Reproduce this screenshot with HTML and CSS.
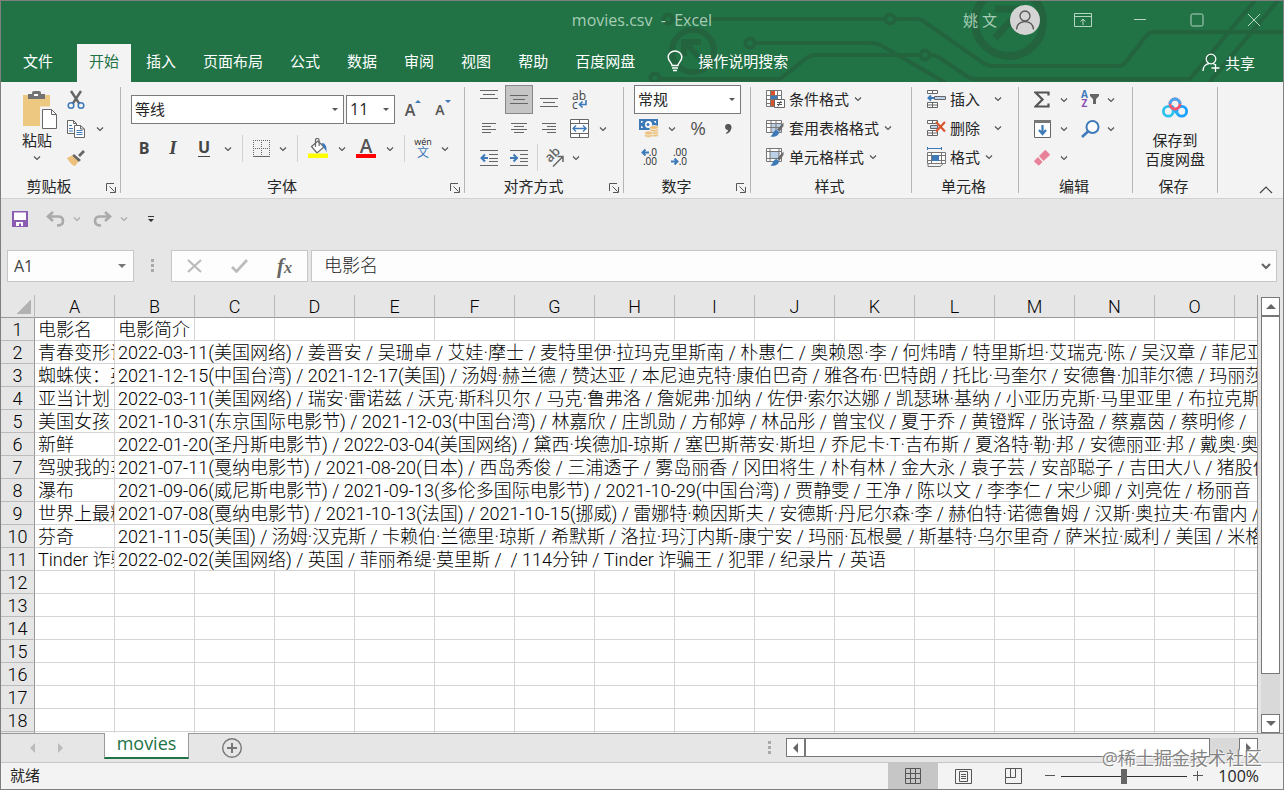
FILE: index.html
```html
<!DOCTYPE html>
<html lang="zh-CN">
<head>
    <meta charset="UTF-8">
    <meta name="viewport" content="width=device-width, initial-scale=1.0">
    <title>movies.csv - Excel</title>
    <link rel="stylesheet" href="styles.css">
</head>
<body>
    <!-- shared glyphs -->
    <svg class="defs" aria-hidden="true">
        <symbol id="chev" viewBox="0 0 8 8"><path d="M1 2.5l3 3 3-3" fill="none" stroke="currentColor" stroke-width="1.2"/></symbol>
        <symbol id="launch" viewBox="0 0 10 10"><path d="M.5 8V.5H8M3.5 3.5l5 5M9.5 4v5.500H4" fill="none" stroke="#555"/></symbol>
        <symbol id="brush" viewBox="0 0 20 20">
            <path d="M18.500 4.500L12 11.500l2.500 2L18.500 8z" fill="#6a6a6a"/>
            <path d="M11.500 12c-3 0-3 4-6 6.500 4 .8 8.500-.5 8.500-4.500z" fill="#3f7ab8"/>
        </symbol>
    </svg>

    <div class="window">
        <header class="top">
            <svg class="circuit" width="640" height="81" viewBox="644 1 640 81" fill="none" stroke="#23643f" stroke-width="4" aria-hidden="true">
                <circle cx="669" cy="19" r="4.500"/><circle cx="891" cy="19" r="4.500"/>
                <path d="M674 19h212M896 19h22q5 0 9 4l56 39q5 4 10 4h126q5 0 8-4l20-26q3-4 8-4h140"/>
                <circle cx="751" cy="43" r="4.500"/>
                <path d="M756 43h115q8 0 14 4l62 36"/>
                <circle cx="926" cy="55" r="4.500"/><circle cx="656" cy="78" r="4.500"/>
                <path d="M661 79h120l28-22q3-2 8-2h104M931 55q6 0 10 3l28 19q3 2 8 2h214l66-80M1209 84l72-86"/>
                <circle cx="694" cy="51" r="21" stroke-width="6"/>
                <path d="M705 62l-20-20M685 56V42h17" stroke-width="6"/>
                <circle cx="1010" cy="22" r="34" stroke-width="8"/>
                <path d="M996 38l24-26M996 9h24v25" stroke-width="7"/>
            </svg>

            <div class="titlebar">
                <h1 class="doc-title">movies.csv&nbsp; -&nbsp; Excel</h1>
                <div class="account">
                    <span class="user">姚 文</span>
                    <svg class="avatar" width="30" height="30" viewBox="0 0 30 30"><circle cx="15" cy="15" r="15" fill="#d4d4d4"/><g fill="none" stroke="#555" stroke-width="1.3"><circle cx="15" cy="11" r="5"/><path d="M6.500 24.500c0-10.500 17-10.500 17 0"/></g></svg>
                    <button class="win-btn" aria-label="功能区显示选项"><svg width="18" height="14" viewBox="0 0 18 14"><path d="M.5.5h17v13H.5zM.5 3.500h17M9 12V6M6.500 8.500L9 6l2.500 2.500"/></svg></button>
                    <button class="win-btn" aria-label="最小化"><svg width="14" height="14" viewBox="0 0 14 14"><path d="M1 6.500h12"/></svg></button>
                    <button class="win-btn" aria-label="最大化"><svg width="14" height="14" viewBox="0 0 14 14"><rect x="1" y="1" width="12" height="12" rx="1.500"/></svg></button>
                    <button class="win-btn" aria-label="关闭"><svg width="14" height="14" viewBox="0 0 14 14"><path d="M1 1l12 12M13 1L1 13"/></svg></button>
                </div>
            </div>

            <nav class="tabs">
                <button class="tab file">文件</button>
                <button class="tab active">开始</button>
                <button class="tab">插入</button>
                <button class="tab">页面布局</button>
                <button class="tab">公式</button>
                <button class="tab">数据</button>
                <button class="tab">审阅</button>
                <button class="tab">视图</button>
                <button class="tab">帮助</button>
                <button class="tab">百度网盘</button>
                <button class="tab tell-me">
                    <svg width="16" height="22" viewBox="0 0 16 22" fill="none" stroke="#fff" stroke-width="1.4"><path d="M5 15.500c0-3-3.800-4-3.800-8.200a6.800 6.300 0 0 1 13.600 0c0 4.200-3.800 5.200-3.800 8.200zM5 18h6M6 20.500h4"/></svg>
                    操作说明搜索
                </button>
                <button class="tab share">
                    <svg width="19" height="19" viewBox="0 0 19 19" fill="none" stroke="#fff" stroke-width="1.300"><circle cx="9" cy="6" r="4.800"/><path d="M1 18c0-4 2.500-7 6-7.500M11 10.500l2 1M13.500 11v8M9.500 15h8"/></svg>
                    共享
                </button>
            </nav>
        </header>

        <section class="ribbon">
            <div class="group clipboard">
                <div class="body">
                    <button class="big paste">
                        <svg width="34" height="38" viewBox="0 0 34 38"><path d="M0 4h27v31H0z" fill="#ecc880"/><path d="M5 3h4V2q0-2 2-2h5q2 0 2 2v1h4v5H5z" fill="#737373"/><path d="M11 3h4v2h-4z" fill="#fff"/><path d="M18.500 17h11v0l4.500 5v15.500H18.500z" fill="#fff" stroke="#f3f3f3" stroke-width="3"/><path d="M19.500 18.500h9l5 5v14h-14zM28.500 18.500v5h5" fill="#fff" stroke="#666"/></svg>
                        <span>粘贴</span>
                        <svg class="chev"><use href="#chev"/></svg>
                    </button>
                    <div class="stack">
                        <div class="row"><button class="ib" aria-label="剪切"><svg width="18" height="20" viewBox="0 0 18 20"><path d="M4 1l8.500 13M14 1L5.500 14" stroke="#666" stroke-width="2.400" fill="none"/><g fill="none" stroke="#3f7ab8" stroke-width="1.500"><circle cx="4" cy="15.500" r="2.800"/><circle cx="14" cy="15.500" r="2.800"/></g></svg></button></div>
                        <div class="row"><button class="ib" aria-label="复制"><svg width="18" height="18" viewBox="0 0 18 18"><g fill="#fff" stroke="#666"><path d="M.5.500h6l3 3v10h-9zM6.500.500v3h3"/><path d="M7.500 5.500h6l4 3.500v8.500h-10zM13.500 5.500V9h4"/></g><path d="M2 5.500h3M2 8.500h4M2 11h4M9.500 10.500h6M9.500 12.500h6M9.500 14.500h6" stroke="#3f7ab8"/></svg></button><button class="drop" aria-label="复制选项"><svg class="chev"><use href="#chev"/></svg></button></div>
                        <div class="row"><button class="ib" aria-label="格式刷"><svg width="18" height="16" viewBox="0 0 18 16"><path d="M7 4l7 6-2.500 2L5 6zM11 5l5-5 2 2-5 5z" fill="#666"/><path d="M0 8l5-2.500 6.500 6L8 16q-4-1-8-8z" fill="#ecc07a"/></svg></button></div>
                    </div>
                </div>
                <div class="caption">剪贴板<button class="launcher" aria-label="剪贴板设置"><svg width="10" height="10"><use href="#launch"/></svg></button></div>
            </div>

            <div class="group font">
                <div class="body lower">
                    <div class="row">
                        <span class="combo name"><select aria-label="字体"><option>等线</option></select></span>
                        <span class="combo size"><select aria-label="字号"><option>11</option></select></span>
                        <button class="ib grow" aria-label="增大字号">A<i class="tri up"></i></button>
                        <button class="ib shrink" aria-label="减小字号">A<i class="tri down"></i></button>
                    </div>
                    <div class="row formats">
                        <button class="ib bold" aria-label="加粗">B</button>
                        <button class="ib italic" aria-label="倾斜">I</button>
                        <button class="ib under" aria-label="下划线"><span>U</span></button>
                        <button class="drop" aria-label="下划线选项"><svg class="chev"><use href="#chev"/></svg></button>
                        <span class="vline"></span>
                        <button class="ib narrow" aria-label="边框"><svg width="17" height="17" viewBox="0 0 17 17" fill="none" stroke="#666"><path d="M0 .5h17M0 8.500h17M.5 0v16M8.500 0v16M16.500 0v16" stroke-dasharray="1 1"/><path d="M0 16.500h17"/></svg></button>
                        <button class="drop" aria-label="边框选项"><svg class="chev"><use href="#chev"/></svg></button>
                        <span class="vline"></span>
                        <button class="ib" aria-label="填充颜色"><svg width="20" height="20" viewBox="0 0 20 20"><path d="M3.500 8.500L10 3l6 6-7 6z" fill="#fff" stroke="#666" stroke-width="1.200"/><path d="M7.500 9V2.500q0-2 1.800-2t1.800 2V8" fill="none" stroke="#666" stroke-width="1.200"/><path d="M13.500 5q6 0 5 9.500-1-3-3-5z" fill="#3f7ab8"/><path d="M0 15.500h20V20H0z" fill="#ff0"/></svg></button>
                        <button class="drop" aria-label="填充颜色选项"><svg class="chev"><use href="#chev"/></svg></button>
                        <button class="ib color" aria-label="字体颜色"><span>A</span></button>
                        <button class="drop" aria-label="字体颜色选项"><svg class="chev"><use href="#chev"/></svg></button>
                        <span class="vline"></span>
                        <button class="ib narrow pinyin" aria-label="拼音"><span>wén</span><span>文</span></button>
                        <button class="drop" aria-label="拼音选项"><svg class="chev"><use href="#chev"/></svg></button>
                    </div>
                </div>
                <div class="caption">字体<button class="launcher" aria-label="字体设置"><svg width="10" height="10"><use href="#launch"/></svg></button></div>
            </div>

            <div class="group align">
                <div class="body">
                    <div class="row">
                        <button class="ib" aria-label="顶端对齐"><svg class="lines" width="18" height="20"><path d="M0 .5h18M3 4.500h12M0 8.500h18"/></svg></button>
                        <button class="ib on" aria-label="垂直居中"><svg class="lines" width="18" height="20"><path d="M0 5.500h18M3 9.500h12M0 13.500h18"/></svg></button>
                        <button class="ib" aria-label="底端对齐"><svg class="lines" width="18" height="20"><path d="M0 8.500h18M3 12.500h12M0 16.500h18"/></svg></button>
                        <button class="ib wrap" aria-label="自动换行"><span>ab</span><span>c<svg width="9" height="8" viewBox="0 0 9 8"><path d="M8 0v4.500H2M4.500 1.500l-3 3 3 3" fill="none" stroke="#3f7ab8" stroke-width="1.600"/></svg></span></button>
                    </div>
                    <div class="row">
                        <button class="ib" aria-label="左对齐"><svg class="lines" width="14" height="11"><path d="M0 .5h14M0 3.500h9M0 6.500h14M0 9.500h9"/></svg></button>
                        <button class="ib" aria-label="居中"><svg class="lines" width="16" height="11"><path d="M0 .5h16M3 3.500h10M0 6.500h16M3 9.500h10"/></svg></button>
                        <button class="ib" aria-label="右对齐"><svg class="lines" width="14" height="11"><path d="M0 .5h14M5 3.500h9M0 6.500h14M5 9.500h9"/></svg></button>
                        <button class="ib" aria-label="合并后居中"><svg width="19" height="19" viewBox="0 0 19 19"><path d="M.5.500h18v18H.5zM.5 4.500h18M.5 14.500h18M9.500.500v4M9.500 14.500v4" fill="#fff" stroke="#666"/><path d="M3 9.500h13M6 6.500l-3 3 3 3M13 6.500l3 3-3 3" fill="none" stroke="#3f7ab8" stroke-width="1.400"/></svg></button>
                        <button class="drop" aria-label="合并选项"><svg class="chev"><use href="#chev"/></svg></button>
                    </div>
                    <div class="row">
                        <button class="ib" aria-label="减少缩进"><svg class="lines" width="18" height="16"><path d="M0 .5h18M9 4.500h9M9 8.500h9M9 11.500h9M0 15.500h18"/><path d="M8 8H1.500M5 4.500L1.500 8 5 11.500" class="blue"/></svg></button>
                        <button class="ib" aria-label="增加缩进"><svg class="lines" width="18" height="16"><path d="M0 .5h18M10 4.500h8M10 8.500h8M10 11.500h8M0 15.500h18"/><path d="M0 8h6.500M3.500 4.500L7 8l-3.500 3.500" class="blue"/></svg></button>
                        <span class="vline tight"></span>
                        <button class="ib narrow" aria-label="方向"><svg class="orient" width="20" height="20" viewBox="0 0 20 20"><text x="6" y="15" transform="rotate(-45 6 15)">ab</text><path d="M9 18.500L18.500 9M13.500 8.500h5.500V14" fill="none" stroke="#666" stroke-width="1.500"/></svg></button>
                        <button class="drop" aria-label="方向选项"><svg class="chev"><use href="#chev"/></svg></button>
                    </div>
                </div>
                <div class="caption">对齐方式<button class="launcher" aria-label="对齐设置"><svg width="10" height="10"><use href="#launch"/></svg></button></div>
            </div>

            <div class="group number">
                <div class="body">
                    <div class="row">
                        <span class="combo format"><select aria-label="数字格式"><option>常规</option></select></span>
                    </div>
                    <div class="row">
                        <button class="ib" aria-label="会计数字格式"><svg width="20" height="19" viewBox="0 0 20 19"><path d="M0 0h19v11H0z" fill="#3f7ab8"/><path d="M2 2h2q-.5 2-2 2zM17 2h-2q.5 2 2 2zM2 9h2q-.5-2-2-2z" fill="#fff"/><circle cx="9.500" cy="5.500" r="3.500" fill="#fff"/><circle cx="9" cy="5.500" r="1.500" fill="#3f7ab8"/><g fill="#ecc07a" stroke="#f3f3f3" stroke-width=".8"><ellipse cx="15" cy="16" rx="4.500" ry="2"/><ellipse cx="15" cy="13.500" rx="4.500" ry="2"/><ellipse cx="15" cy="11" rx="4.500" ry="2"/><ellipse cx="15" cy="8.500" rx="4.500" ry="2"/><ellipse cx="9.500" cy="16.500" rx="4" ry="2"/><ellipse cx="9.500" cy="14" rx="4" ry="2"/></g></svg></button>
                        <button class="drop" aria-label="货币选项"><svg class="chev"><use href="#chev"/></svg></button>
                        <button class="ib percent" aria-label="百分比样式">%</button>
                        <button class="ib comma" aria-label="千位分隔样式"><svg width="7" height="10" viewBox="0 0 7 10"><path d="M3 0a3 3 0 0 1 3.500 3Q6.500 8 1.500 10l-.5-1q2-1.500 2.200-3A3 3 0 0 1 3 0z" fill="#555"/></svg></button>
                    </div>
                    <div class="row">
                        <button class="ib decimals" aria-label="增加小数位数"><span><svg width="8" height="7"><path d="M8 3.500H1.500M4.500.5l-3 3 3 3" class="blue"/></svg>.0</span><span>.00</span></button>
                        <button class="ib decimals" aria-label="减少小数位数"><span>.00</span><span><svg width="8" height="7"><path d="M0 3.500h6.500M3.500.5l3 3-3 3" class="blue"/></svg>.0</span></button>
                    </div>
                </div>
                <div class="caption">数字<button class="launcher" aria-label="数字设置"><svg width="10" height="10"><use href="#launch"/></svg></button></div>
            </div>

            <div class="group styles">
                <div class="body">
                    <button class="row cmd"><svg width="20" height="20" viewBox="0 0 20 20"><path d="M1.500 1.500h15v16h-15zM1.500 6.500h15M1.500 10.500h15M1.500 14.500h15M5.500 1.500v16M12.500 1.500v16" fill="#fff" stroke="#777"/><path d="M6 2h4v4H6zM6 11h3v6H6z" fill="#d9532c"/><path d="M6 7h6v3H6z" fill="#3f7ab8"/><path d="M9.500 10.500h10v8h-10z" fill="#fff" stroke="#666"/><path d="M12 13.500h5M12 15.500h5M16 12l-3 5.500" stroke="#555"/></svg>条件格式<svg class="chev"><use href="#chev"/></svg></button>
                    <button class="row cmd"><svg width="20" height="20" viewBox="0 0 20 20"><path d="M1.500 2.500h15v12h-15z" fill="#fff" stroke="#777"/><path d="M6 6h10v8H6z" fill="#bcd0e8"/><path d="M1.500 5.500h15M1.500 9.500h15M6 2.500v12M11 2.500v12" stroke="#777"/><use href="#brush"/></svg>套用表格格式<svg class="chev"><use href="#chev"/></svg></button>
                    <button class="row cmd"><svg width="20" height="20" viewBox="0 0 20 20"><path d="M1.500 1.500h15v13h-15z" fill="#fff" stroke="#777"/><path d="M5 5h9v7H5z" fill="#bcd0e8"/><path d="M1.500 4.500h15M1.500 11.500h15M5 1.500v13M14 1.500v13" stroke="#777"/><use href="#brush"/></svg>单元格样式<svg class="chev"><use href="#chev"/></svg></button>
                </div>
                <div class="caption">样式</div>
            </div>

            <div class="group cells">
                <div class="body">
                    <button class="row cmd wide"><svg width="19" height="20" viewBox="0 0 19 20"><path d="M.5 1.500h10v3H.5zM5.500 1.500v3M.5 13.500h10v5H.5zM.5 16h10M5.500 13.500v5M7.500 7.500h11v3h-11z" fill="#fff" stroke="#666"/><path d="M8 8h10v2H8z" fill="#bcd0e8"/><path d="M7 9H1.500M4 6.500L1.500 9 4 11.500" class="blue"/></svg>插入<svg class="chev"><use href="#chev"/></svg></button>
                    <button class="row cmd wide"><svg width="19" height="20" viewBox="0 0 19 20"><path d="M.5 2.500h10v3H.5zM5.500 2.500v3M.5 12.500h10v5H.5zM.5 15h10M5.500 12.500v5" fill="#fff" stroke="#666"/><path d="M3.500 7.500h7v3h-7z" fill="#bcd0e8" stroke="#666"/><path d="M9 4l9 9.500M18 4L9 13.500" stroke="#d9532c" stroke-width="2.200"/></svg>删除<svg class="chev"><use href="#chev"/></svg></button>
                    <button class="row cmd"><svg width="19" height="20" viewBox="0 0 19 20"><path d="M.5 0v3M14.500 0v3M1 1.500h13" stroke="#3f7ab8"/><path d="M.5 5.500h18v11H.5zM.5 8.500h18M.5 13.500h18M4.500 5.500v11M14.500 5.500v11" fill="#fff" stroke="#777"/><path d="M5 8h7v6H5z" fill="#3f7ab8"/><path d="M1 19.500h12q2-1 3-3M1 16.500v3" fill="none" stroke="#777"/></svg>格式<svg class="chev"><use href="#chev"/></svg></button>
                </div>
                <div class="caption">单元格</div>
            </div>

            <div class="group edit">
                <div class="body">
                    <div class="row">
                        <button class="ib narrow" aria-label="自动求和"><svg width="16" height="17" viewBox="0 0 16 17"><path d="M14.500 4.500V1.500H1.500l7 7-7 7h13v-3" fill="none" stroke="#555" stroke-width="2.200"/></svg></button>
                        <button class="drop" aria-label="求和选项"><svg class="chev"><use href="#chev"/></svg></button>
                        <button class="ib sort" aria-label="排序和筛选"><span><b>A</b><b>Z</b></span><svg width="9" height="10" viewBox="0 0 9 10"><path d="M0 0h9v2L6 5v5H3V5L0 2z" fill="#666"/></svg></button>
                        <button class="drop" aria-label="排序选项"><svg class="chev"><use href="#chev"/></svg></button>
                    </div>
                    <div class="row">
                        <button class="ib narrow" aria-label="填充"><svg width="17" height="18" viewBox="0 0 17 18"><path d="M.5.500h16v17H.5z" fill="#fff" stroke="#666"/><path d="M0 0h17v3H0z" fill="#777"/><path d="M8.500 5v8M5 10l3.500 4 3.500-4" fill="none" stroke="#3f7ab8" stroke-width="2.200"/></svg></button>
                        <button class="drop" aria-label="填充选项"><svg class="chev"><use href="#chev"/></svg></button>
                        <button class="ib find" aria-label="查找和选择"><svg width="19" height="18" viewBox="0 0 19 18"><circle cx="11.500" cy="7" r="6" fill="#fff" stroke="#3f7ab8" stroke-width="2"/><path d="M7 11.500L1 17" stroke="#3f7ab8" stroke-width="2.600"/></svg></button>
                        <button class="drop" aria-label="查找选项"><svg class="chev"><use href="#chev"/></svg></button>
                    </div>
                    <div class="row">
                        <button class="ib narrow" aria-label="清除"><svg width="16" height="16" viewBox="0 0 16 16"><path d="M10.500.500q.8-.8 1.600 0L15.500 4q.8.800 0 1.600L9.500 11 5 6zM4 7l4.500 5-3 3q-.8.800-1.600 0L.5 12q-.8-.8 0-1.600z" fill="#e8829a"/></svg></button>
                        <button class="drop" aria-label="清除选项"><svg class="chev"><use href="#chev"/></svg></button>
                    </div>
                </div>
                <div class="caption">编辑</div>
            </div>

            <div class="group save">
                <div class="body">
                    <button class="big cloud">
                        <svg width="26" height="21" viewBox="0 0 26 21" fill="none" stroke-width="2.800"><circle cx="6.300" cy="14.200" r="4.900" stroke="#2cc3ee"/><circle cx="19.700" cy="14.200" r="4.900" stroke="#1ba2ff"/><path d="M9.500 10.800l2-2M16.500 17.800L12 13" stroke="#2cb0f4"/><circle cx="13" cy="7" r="5" stroke="#f5546f"/><path d="M8 7a5 5 0 0 1 10 0" stroke="#48a7ee"/></svg>
                        <span>保存到<br>百度网盘</span>
                    </button>
                </div>
                <div class="caption">保存</div>
            </div>

            <button class="collapse" aria-label="折叠功能区"><svg width="14" height="8" viewBox="0 0 14 8"><path d="M1 7l6-6 6 6" fill="none" stroke="#444" stroke-width="1.200"/></svg></button>
        </section>

        <div class="quick">
            <button class="q" aria-label="保存"><svg width="16" height="16" viewBox="0 0 16 16"><path d="M0 0h16v16H0z" fill="#8a5bb0"/><path d="M2 1.500h12V9H2zM4 11h7v4H9v-2.500H7V15H4z" fill="#fff"/></svg></button>
            <button class="q undo" aria-label="撤消"><svg width="19" height="16" viewBox="0 0 19 16"><path d="M2 5.500h10q5 0 5 4.500t-6 4.500M7 1L2 5.500 7 10" fill="none" stroke="#aaa" stroke-width="2.600"/></svg></button>
            <button class="drop dim" aria-label="撤消选项"><svg class="chev"><use href="#chev"/></svg></button>
            <button class="q redo" aria-label="恢复"><svg width="19" height="16" viewBox="0 0 19 16"><path d="M17 5.500H7q-5 0-5 4.500t6 4.500M12 1l5 4.500-5 4.500" fill="none" stroke="#aaa" stroke-width="2.600"/></svg></button>
            <button class="drop dim" aria-label="恢复选项"><svg class="chev"><use href="#chev"/></svg></button>
            <button class="q custom" aria-label="自定义快速访问工具栏"><svg width="6" height="6" viewBox="0 0 6 6"><path d="M0 0h6v1H0zM0 3h6L3 6z" fill="#333"/></svg></button>
        </div>

        <div class="formula-bar">
            <span class="combo cell-name"><select aria-label="名称框"><option>A1</option></select></span>
            <span class="grip"></span>
            <div class="fx">
                <button aria-label="取消"><svg width="15" height="14" viewBox="0 0 15 14"><path d="M1 1l13 12M14 1L1 13" stroke="#bbb" stroke-width="2.200"/></svg></button>
                <button aria-label="输入"><svg width="17" height="14" viewBox="0 0 17 14"><path d="M1 8l4.500 4.500L16 1" fill="none" stroke="#bbb" stroke-width="2.600"/></svg></button>
                <button class="fn" aria-label="插入函数"><span>f<small>x</small></span></button>
            </div>
            <div class="entry">
                <input type="text" value="电影名" aria-label="编辑栏">
                <button aria-label="展开编辑栏"><svg width="10" height="7" viewBox="0 0 10 7"><path d="M1 1l4 4 4-4" fill="none" stroke="#666" stroke-width="2.200"/></svg></button>
            </div>
        </div>

        <main class="sheet">
            <div class="grid"><table id="cells"></table></div>
            <div class="vscroll">
                <button aria-label="向上滚动"><i class="arrow up"></i></button>
                <div class="thumb"></div>
                <div class="track"></div>
                <button aria-label="向下滚动"><i class="arrow down"></i></button>
            </div>
        </main>

        <div class="sheet-tabs">
            <button class="nav" aria-label="上一张"><i class="arrow left"></i></button>
            <button class="nav" aria-label="下一张"><i class="arrow right"></i></button>
            <button class="sheet-tab">movies</button>
            <button class="add" aria-label="新工作表"><svg width="22" height="22" viewBox="0 0 22 22"><circle cx="11" cy="11" r="9.300" fill="none" stroke="#777" stroke-width="1.400"/><path d="M11 6v10M6 11h10" stroke="#777" stroke-width="2"/></svg></button>
            <span class="grip"></span>
            <div class="hscroll">
                <button aria-label="向左滚动"><i class="arrow left"></i></button>
                <div class="thumb"></div>
                <div class="track"></div>
                <button aria-label="向右滚动"><i class="arrow right"></i></button>
            </div>
        </div>

        <footer class="status">
            <span class="ready">就绪</span>
            <div class="views">
                <button class="on" aria-label="普通"><svg width="16" height="16" viewBox="0 0 16 16"><path d="M.5.500h15v15H.5zM.5 5.500h15M.5 10.500h15M5.500.500v15M10.500.500v15"/></svg></button>
                <button aria-label="页面布局视图"><svg width="17" height="15" viewBox="0 0 17 15"><path d="M.5.500h16v14H.5zM4.500 2.500h8v10h-8zM6 5.500h5M6 7.500h5M6 9.500h5"/></svg></button>
                <button aria-label="分页预览"><svg width="17" height="16" viewBox="0 0 17 16"><path d="M.5.500h16v15H.5zM.5 9.500h10V.5M5.500.500v9"/></svg></button>
            </div>
            <div class="zoom">
                <button aria-label="缩小"><svg width="10" height="10" viewBox="0 0 10 10"><path d="M0 4.500h10"/></svg></button>
                <input type="range" min="10" max="190" value="100" aria-label="缩放">
                <button aria-label="放大"><svg width="10" height="10" viewBox="0 0 10 10"><path d="M0 4.500h10M4.500 0v10"/></svg></button>
                <output>100%</output>
            </div>
        </footer>
        <div class="watermark">@稀土掘金技术社区</div>
    </div>

    <script src="sheet.js"></script>
</body>
</html>
```
FILE: styles.css
```css
* {
    box-sizing: border-box;
}
body {
    margin: 0;
    font-family: "Open Sans", "Noto Sans CJK SC", sans-serif;
    font-size: 15px;
    color: #262626;
}
button, input, select {
    font: inherit;
    color: inherit;
    margin: 0;
    padding: 0;
    border: none;
    background: none;
}
button {
    display: flex;
    align-items: center;
    justify-content: center;
    white-space: nowrap;
    flex: none;
}
svg {
    display: block;
    flex: none;
}
.defs {
    position: absolute;
    width: 0;
    height: 0;
}
.window {
    position: relative;
    display: flex;
    flex-direction: column;
    height: 100vh;
    border: 1px solid #7f7f7f;
    background: #e6e6e6;
    overflow: hidden;
}

/* title bar and tabs */
.top {
    position: relative;
    background: #217346;
    color: #fff;
}
.circuit {
    position: absolute;
    top: 0;
    right: 0;
}
.titlebar {
    position: relative;
    display: grid;
    grid-template-columns: 1fr auto 1fr;
    align-items: center;
    height: 38px;
    color: #a6cdb5;
}
.doc-title {
    grid-column: 2;
    margin: 0;
    font-size: 16px;
    font-weight: 400;
}
.account {
    display: flex;
    align-items: center;
    justify-content: flex-end;
    padding-right: 1px;
}
.user {
    padding-bottom: 2px;
}
.avatar {
    margin: 0 14px 0 13px;
}
.win-btn {
    width: 57px;
    height: 38px;
}
.win-btn svg {
    fill: none;
    stroke: #b5d6c2;
}
.tabs {
    position: relative;
    display: flex;
    gap: 3px;
    padding: 5px 16px 0 10px;
}
.tab {
    height: 38px;
    padding: 0 12px 5px;
}
.tab.file {
    margin-right: 9px;
}
.tab.active {
    background: #f3f3f3;
    color: #217346;
}
.tell-me {
    gap: 15px;
    margin-left: 5px;
}
.share {
    gap: 4px;
    margin-left: auto;
    padding-bottom: 2px;
}

/* ribbon */
.ribbon {
    display: grid;
    grid-template-columns: 120px 344px 159px 127px 161px 107px 114px 85px 1fr;
    height: 117px;
    background: #f3f3f3;
    border-bottom: 1px solid #d2d2d2;
}
.group {
    position: relative;
    display: flex;
    flex-direction: column;
    padding-top: 3px;
}
.group::after {
    content: "";
    position: absolute;
    top: 5px;
    right: 0;
    bottom: 5px;
    width: 1px;
    background: #b5b5b5;
}
.body {
    height: 87px;
}
.body.lower {
    padding-top: 10px;
}
.caption {
    display: flex;
    align-items: center;
    justify-content: center;
    height: 26px;
    padding-right: 22px;
}
.launcher {
    position: absolute;
    right: 5px;
    bottom: 5px;
}
.styles .caption, .cells .caption, .edit .caption, .save .caption {
    padding-right: 4px;
}
.row {
    display: flex;
    align-items: center;
    height: 29px;
}
.ib {
    width: 30px;
    height: 29px;
}
.ib.narrow {
    width: 26px;
}
.drop {
    width: 18px;
    height: 29px;
    color: #555;
}
.dim {
    color: #aaa;
}
.chev {
    width: 8px;
    height: 8px;
}
.vline {
    width: 1px;
    height: 27px;
    margin: 0 5px;
    background: #d2d2d2;
}
.vline.tight {
    margin: 0 3px;
}
.blue {
    fill: none;
    stroke: #3f7ab8;
    stroke-width: 2;
}
.lines {
    stroke: #666;
    fill: none;
}
.lines .blue {
    stroke: #3f7ab8;
}
.big {
    flex-direction: column;
    justify-content: flex-start;
    line-height: 19px;
}
.clipboard .body {
    display: flex;
}
.clipboard .caption {
    padding-right: 24px;
}
.paste {
    width: 60px;
    padding: 6px 0 0 18px;
    gap: 2px;
    height: 87px;
}
.paste span, .paste .chev {
    margin-right: 6px;
}
.paste .chev {
    margin-top: 2px;
    color: #555;
}
.combo {
    position: relative;
    height: 29px;
    border: 1px solid #7a7a7a;
    background: #fff;
}
.combo select {
    appearance: none;
    width: 100%;
    height: 100%;
    padding: 0 0 2px 3px;
}
.combo::after {
    content: "";
    position: absolute;
    top: 12px;
    right: 5px;
    border: 3px solid transparent;
    border-top-color: #555;
    border-bottom: none;
}
.font .body, .number .body {
    padding-left: 10px;
}
.name {
    width: 213px;
    margin-right: 2px;
}
.size {
    width: 49px;
    margin-right: 3px;
    font-size: 16px;
}
.formats {
    margin-top: 10px;
}
.formats .ib {
    padding-bottom: 1px;
}
.grow, .shrink {
    font-weight: 600;
    color: #555;
}
.grow {
    font-size: 16px;
}
.shrink {
    font-size: 14px;
}
.tri {
    align-self: flex-start;
    margin-top: 5px;
    border: 3px solid transparent;
}
.tri.up {
    border-top: none;
    border-bottom-color: #3f7ab8;
}
.tri.down {
    border-bottom: none;
    border-top-color: #3f7ab8;
}
.bold, .italic, .under {
    color: #444;
    font-size: 16px;
    font-weight: 700;
}
.bold {
    width: 26px;
}
.italic {
    width: 32px;
    font-family: "Liberation Serif", serif;
    font-style: italic;
    font-size: 19px;
}
.under span {
    line-height: 17px;
    border-bottom: 1px solid #444;
}
.color span {
    width: 20px;
    line-height: 16px;
    font-size: 19px;
    font-weight: 600;
    color: #555;
    border-bottom: 4px solid #f00;
}
.pinyin, .wrap, .decimals {
    flex-direction: column;
}
.pinyin span {
    line-height: 8px;
    font-size: 9px;
}
.pinyin span + span {
    margin-top: 1px;
    line-height: 12px;
    font-size: 12px;
    color: #3f7ab8;
}
.align .body {
    padding-left: 9px;
}
.ib.on {
    width: 28px;
    margin: 0 1px;
    background: #c5c5c5;
    border: 1px solid #888;
}
.wrap {
    align-items: flex-start;
    padding-left: 8px;
}
.wrap span {
    display: flex;
    align-items: center;
    line-height: 9px;
    font-size: 12px;
    color: #444;
}
.orient {
    overflow: visible;
}
.orient text {
    font-size: 13px;
    font-weight: 600;
    fill: #666;
}
.format {
    width: 107px;
}
.number .drop {
    width: 16px;
}
.percent {
    width: 36px;
    padding-bottom: 2px;
    font-size: 19px;
    color: #555;
}
.comma {
    width: 24px;
}
.decimals {
    align-items: flex-end;
    padding: 0 7px 2px 0;
    font-size: 10px;
    line-height: 9px;
}
.decimals span {
    display: flex;
    align-items: center;
}
.cmd {
    gap: 4px;
    padding-bottom: 2px;
}
.cmd .chev {
    margin-left: 1px;
    color: #555;
}
.cmd.wide .chev {
    margin-left: 10px;
}
.styles .body {
    padding-left: 14px;
}
.cells .body {
    padding-left: 15px;
}
.edit .body {
    padding-left: 10px;
}
.sort, .find {
    width: 24px;
    margin: 0 0 0 5px;
}
.edit .drop {
    width: 18px;
}
.sort {
    gap: 2px;
    padding-bottom: 2px;
}
.sort span {
    display: flex;
    flex-direction: column;
}
.sort b {
    font-size: 10px;
    line-height: 9px;
    color: #3f7ab8;
}
.sort b + b {
    color: #8a4fb0;
}
.cloud {
    width: 84px;
    padding-top: 12px;
    gap: 13px;
}
.collapse {
    align-self: end;
    justify-self: end;
    margin: 0 10px 4px;
}

/* quick access toolbar */
.quick {
    display: flex;
    align-items: center;
    height: 40px;
    padding-left: 11px;
}
.quick .drop {
    width: 24px;
}
.undo {
    margin-left: 18px;
}
.redo {
    margin-left: 4px;
}
.custom {
    margin-left: 12px;
}

/* formula bar */
.formula-bar {
    display: flex;
    height: 32px;
    margin: 11px 6px 13px;
}
.cell-name, .fx, .entry {
    height: 32px;
    border: 1px solid #c6c6c6;
    background: #fdfdfd;
}
.cell-name {
    width: 127px;
    font-size: 16px;
}
.cell-name select {
    padding: 0 0 1px 6px;
    color: #444;
}
.cell-name::after {
    top: 13px;
    right: 7px;
    border-width: 4px;
    border-top-color: #777;
    border-bottom: none;
}
.grip {
    width: 3px;
    height: 13px;
    background: repeating-linear-gradient(#aaa 0 3px, transparent 3px 5px);
}
.formula-bar .grip {
    margin: 9px 17px 0;
}
.fx {
    display: flex;
    width: 137px;
    margin-right: 3px;
}
.fx button {
    flex: 1;
}
.fn {
    font: italic 700 21px "Liberation Serif", serif;
    color: #666;
}
.fn small {
    font-size: 16px;
}
.entry {
    display: flex;
    flex: 1;
}
.entry input {
    flex: 1;
    min-width: 0;
    padding: 0 0 4px 12px;
    font-size: 18px;
    font-weight: 300;
}
.entry button {
    width: 20px;
}

/* grid */
.sheet {
    display: flex;
    flex: 1;
    min-height: 0;
}
.grid {
    flex: 1;
    min-width: 0;
    overflow: hidden;
    border-right: 1px solid #999;
}
table {
    table-layout: fixed;
    width: 1314px;
    border-collapse: separate;
    border-spacing: 0;
    font-family: Roboto, "Noto Sans CJK SC", sans-serif;
    font-size: 18px;
    font-weight: 300;
    line-height: 21px;
    color: #000;
}
th, td {
    height: 23px;
    padding: 1px 0 0 3px;
    overflow: hidden;
    white-space: pre;
    text-align: left;
    border-right: 1px solid #d4d4d4;
    border-bottom: 1px solid #d4d4d4;
    background: #fff;
}
th {
    padding: 1px 0 0;
    font-weight: 300;
    text-align: center;
    background: #e6e6e6;
    border-right-color: #bbb;
    border-bottom-color: #999;
}
tbody th {
    border-right-color: #999;
    border-bottom-color: #bbb;
}
.corner {
    width: 34px;
    background: linear-gradient(135deg, #e6e6e6 50%, #b2b2b2 50%) 15px 4px / 15px 15px no-repeat #e6e6e6;
}
.vscroll {
    display: flex;
    flex-direction: column;
    width: 19px;
    margin: 2px 3px 0;
    background: #d9d9d9;
}
.vscroll button, .hscroll button, .thumb {
    width: 19px;
    height: 19px;
    background: #fff;
    border: 1px solid #777;
}
.vscroll .thumb {
    flex: 359;
}
.vscroll .track {
    flex: 40;
}
.arrow {
    border: 5px solid transparent;
}
.arrow.up {
    border-top: none;
    border-bottom-color: #666;
}
.arrow.down {
    border-bottom: none;
    border-top-color: #666;
}
.arrow.left {
    border-left: none;
    border-right-color: #666;
}
.arrow.right {
    border-right: none;
    border-left-color: #666;
}

/* sheet tabs */
.sheet-tabs {
    display: flex;
    height: 30px;
    border-top: 1px solid #999;
    border-bottom: 1px solid #c6c6c6;
}
.nav {
    width: 28px;
}
.nav .arrow.left {
    border-right-color: #bbb;
}
.nav .arrow.right {
    border-left-color: #bbb;
}
.nav:first-child {
    margin-left: 17px;
}
.sheet-tab {
    width: 85px;
    height: 26px;
    margin: -1px 32px 0 30px;
    padding-bottom: 4px;
    background: #fff;
    border: 1px solid #999;
    border-top: none;
    border-bottom: 2px solid #217346;
    color: #217346;
    font-size: 18px;
}
.sheet-tabs .grip {
    margin: 7px 15px 0 auto;
}
.hscroll {
    display: flex;
    flex: 0 0 472px;
    height: 19px;
    margin: 4px 25px 0 0;
    background: #d9d9d9;
}
.hscroll .thumb {
    flex: 405;
}
.hscroll .track {
    flex: 29;
}

/* status bar */
.status {
    display: flex;
    align-items: center;
    height: 26px;
    padding-left: 9px;
    background: #f3f3f3;
}
.ready {
    padding-bottom: 3px;
}
.views {
    display: flex;
    margin-left: auto;
}
.views button {
    width: 50px;
    height: 26px;
}
.views .on {
    background: #c6c6c6;
}
.status svg {
    fill: none;
    stroke: #555;
}
.zoom {
    display: flex;
    align-items: center;
    padding: 0 24px 0 7px;
}
.zoom input {
    appearance: none;
    width: 126px;
    height: 15px;
    margin: 0 6px;
    background: linear-gradient(#333, #333) 0 7px / 100% 1px no-repeat;
}
.zoom input::-webkit-slider-thumb {
    appearance: none;
    width: 6px;
    height: 15px;
    background: #666;
}
.zoom output {
    margin-left: 15px;
    font-size: 16px;
}
.watermark {
    position: absolute;
    right: 21px;
    bottom: 18px;
    font-size: 18px;
    line-height: 26px;
    color: rgba(110, 110, 110, .85);
    text-shadow: 0 0 2px #fff, 1px 1px 0 #fff;
}
```
FILE: sheet.js
```js
const COLUMNS = 'ABCDEFGHIJKLMNOP'.split('');
const ROW_COUNT = 19;

// name, details, number of columns the details run over
const movies = [
    ['电影名', '电影简介', 1],
    ['青春变形记', '2022-03-11(美国网络) / 姜晋安 / 吴珊卓 / 艾娃·摩士 / 麦特里伊·拉玛克里斯南 / 朴惠仁 / 奥赖恩·李 / 何炜晴 / 特里斯坦·艾瑞克·陈 / 吴汉章 / 菲尼亚斯', 15],
    ['蜘蛛侠：英雄无归', '2021-12-15(中国台湾) / 2021-12-17(美国) / 汤姆·赫兰德 / 赞达亚 / 本尼迪克特·康伯巴奇 / 雅各布·巴特朗 / 托比·马奎尔 / 安德鲁·加菲尔德 / 玛丽莎·托梅', 15],
    ['亚当计划', '2022-03-11(美国网络) / 瑞安·雷诺兹 / 沃克·斯科贝尔 / 马克·鲁弗洛 / 詹妮弗·加纳 / 佐伊·索尔达娜 / 凯瑟琳·基纳 / 小亚历克斯·马里亚里 / 布拉克斯顿', 15],
    ['美国女孩', '2021-10-31(东京国际电影节) / 2021-12-03(中国台湾) / 林嘉欣 / 庄凯勋 / 方郁婷 / 林品彤 / 曾宝仪 / 夏于乔 / 黄镫辉 / 张诗盈 / 蔡嘉茵 / 蔡明修 / ', 15],
    ['新鲜', '2022-01-20(圣丹斯电影节) / 2022-03-04(美国网络) / 黛西·埃德加-琼斯 / 塞巴斯蒂安·斯坦 / 乔尼卡·T·吉布斯 / 夏洛特·勒·邦 / 安德丽亚·邦 / 戴奥·奥柯尼', 15],
    ['驾驶我的车', '2021-07-11(戛纳电影节) / 2021-08-20(日本) / 西岛秀俊 / 三浦透子 / 雾岛丽香 / 冈田将生 / 朴有林 / 金大永 / 袁子芸 / 安部聪子 / 吉田大八 / 猪股俊明', 15],
    ['瀑布', '2021-09-06(威尼斯电影节) / 2021-09-13(多伦多国际电影节) / 2021-10-29(中国台湾) / 贾静雯 / 王净 / 陈以文 / 李李仁 / 宋少卿 / 刘亮佐 / 杨丽音 ', 15],
    ['世界上最糟糕的人', '2021-07-08(戛纳电影节) / 2021-10-13(法国) / 2021-10-15(挪威) / 雷娜特·赖因斯夫 / 安德斯·丹尼尔森·李 / 赫伯特·诺德鲁姆 / 汉斯·奥拉夫·布雷内 / 挪威', 15],
    ['芬奇', '2021-11-05(美国) / 汤姆·汉克斯 / 卡赖伯·兰德里·琼斯 / 希默斯 / 洛拉·玛汀内斯-康宁安 / 玛丽·瓦根曼 / 斯基特·乌尔里奇 / 萨米拉·威利 / 美国 / 米格尔', 15],
    ['Tinder 诈骗王', '2022-02-02(美国网络) / 英国 / 菲丽希缇·莫里斯 /  / 114分钟 / Tinder 诈骗王 / 犯罪 / 纪录片 / 英语', 10]
];

const table = document.getElementById('cells');

const head = table.createTHead().insertRow();
head.innerHTML = '<th class="corner"></th>' + COLUMNS.map(c => `<th scope="col">${c}</th>`).join('');

const body = table.createTBody();
for (let i = 0; i < ROW_COUNT; i++) {
    const [name, details, span] = movies[i] || ['', '', 1];
    const blanks = '<td></td>'.repeat(COLUMNS.length - 1 - span);
    body.insertRow().innerHTML =
        `<th scope="row">${i + 1}</th><td>${name}</td><td colspan="${span}">${details}</td>${blanks}`;
}
```
